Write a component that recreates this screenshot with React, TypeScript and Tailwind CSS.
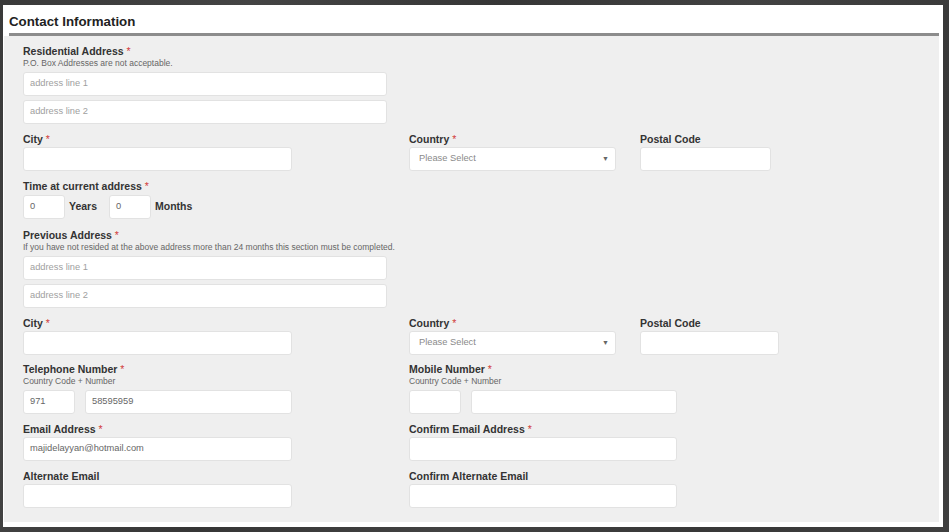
import React from "react";

const font = { fontFamily: '"Liberation Sans", Arial, sans-serif' };

function Label({ text, req }: { text: string; req?: boolean }) {
  return (
    <div className="h-[12px] leading-[12px] text-[10.5px] font-bold text-[#333] whitespace-nowrap">
      {text}
      {req && <span className="text-[#d23c3c] font-normal"> *</span>}
    </div>
  );
}

function Helper({ text }: { text: string }) {
  return (
    <div className="mt-[1px] h-[10px] leading-[10px] text-[8.5px] text-[#666] whitespace-nowrap">{text}</div>
  );
}

function Input({ w, ph, val, cls = "" }: { w: string; ph?: string; val?: string; cls?: string }) {
  return (
    <div
      className={`${w} h-[24px] bg-white border border-[#e2e2e2] rounded-[3px] flex items-center px-[6px] text-[9.3px] ${cls}`}
    >
      {val ? (
        <span className="text-[#666]">{val}</span>
      ) : ph ? (
        <span className="text-[#a0a0a0]">{ph}</span>
      ) : null}
    </div>
  );
}

function Select({ w }: { w: string }) {
  return (
    <div className={`${w} h-[24px] bg-white border border-[#e2e2e2] rounded-[3px] flex items-center justify-between pl-[9px] pr-[6px] text-[9.3px]`}>
      <span className="text-[#8a8a8a]">Please Select</span>
      <span className="text-[#666] text-[7px]">▼</span>
    </div>
  );
}

export default function App() {
  return (
    <div
      className="w-[949px] h-[532px] overflow-hidden pt-[5px] pl-[3px]"
      style={{
        ...font,
        background:
          "linear-gradient(120deg, #3a3a3a 0%, #444 20%, #363636 40%, #424242 60%, #383838 80%, #3f3f3f 100%)",
      }}
    >
      <div className="w-[940px] h-[522px] bg-white flex flex-col">
        <div className="h-[28px] pl-[6px] pt-[9px]">
          <div className="leading-[15px] text-[13.3px] font-bold text-[#222]">Contact Information</div>
        </div>
        <div className="ml-[6px] mr-[4px] h-[3px] bg-[#8c8c8c]" />
        <div className="ml-[1px] mr-[4px] h-[486px] bg-[#efefef] pl-[19px] pt-[9px]">
          {/* Residential */}
          <Label text="Residential Address" req />
          <Helper text="P.O. Box Addresses are not acceptable." />
          <Input w="w-[364px]" ph="address line 1" cls="mt-[4px]" />
          <Input w="w-[364px]" ph="address line 2" cls="mt-[4px]" />

          {/* City row */}
          <div className="flex mt-[9px]">
            <div className="w-[386px]">
              <Label text="City" req />
              <Input w="w-[269px]" cls="mt-[2px]" />
            </div>
            <div className="w-[231px]">
              <Label text="Country" req />
              <div className="mt-[2px]"><Select w="w-[207px]" /></div>
            </div>
            <div>
              <Label text="Postal Code" />
              <Input w="w-[131px]" cls="mt-[2px]" />
            </div>
          </div>

          {/* Time */}
          <div className="mt-[9px]">
            <Label text="Time at current address" req />
            <div className="flex items-center mt-[3px]">
              <Input w="w-[42px]" val="0" />
              <span className="ml-[4px] w-[40px] text-[10.5px] font-bold text-[#333]">Years</span>
              <Input w="w-[42px]" val="0" />
              <span className="ml-[4px] text-[10.5px] font-bold text-[#333]">Months</span>
            </div>
          </div>

          {/* Previous */}
          <div className="mt-[10px]">
            <Label text="Previous Address" req />
            <Helper text="If you have not resided at the above address more than 24 months this section must be completed." />
            <Input w="w-[364px]" ph="address line 1" cls="mt-[4px]" />
            <Input w="w-[364px]" ph="address line 2" cls="mt-[4px]" />
          </div>

          <div className="flex mt-[9px]">
            <div className="w-[386px]">
              <Label text="City" req />
              <Input w="w-[269px]" cls="mt-[2px]" />
            </div>
            <div className="w-[231px]">
              <Label text="Country" req />
              <div className="mt-[2px]"><Select w="w-[207px]" /></div>
            </div>
            <div>
              <Label text="Postal Code" />
              <Input w="w-[139px]" cls="mt-[2px]" />
            </div>
          </div>

          {/* Phones */}
          <div className="flex mt-[8px]">
            <div className="w-[386px]">
              <Label text="Telephone Number" req />
              <Helper text="Country Code + Number" />
              <div className="flex gap-[10px] mt-[4px]">
                <Input w="w-[52px]" val="971" />
                <Input w="w-[207px]" val="58595959" />
              </div>
            </div>
            <div>
              <Label text="Mobile Number" req />
              <Helper text="Country Code + Number" />
              <div className="flex gap-[10px] mt-[4px]">
                <Input w="w-[52px]" />
                <Input w="w-[206px]" />
              </div>
            </div>
          </div>

          {/* Email */}
          <div className="flex mt-[9px]">
            <div className="w-[386px]">
              <Label text="Email Address" req />
              <Input w="w-[269px]" val="majidelayyan@hotmail.com" cls="mt-[2px]" />
            </div>
            <div>
              <Label text="Confirm Email Address" req />
              <Input w="w-[268px]" cls="mt-[2px]" />
            </div>
          </div>

          <div className="flex mt-[9px]">
            <div className="w-[386px]">
              <Label text="Alternate Email" />
              <Input w="w-[269px]" cls="mt-[2px]" />
            </div>
            <div>
              <Label text="Confirm Alternate Email" />
              <Input w="w-[268px]" cls="mt-[2px]" />
            </div>
          </div>
        </div>
      </div>
    </div>
  );
}
